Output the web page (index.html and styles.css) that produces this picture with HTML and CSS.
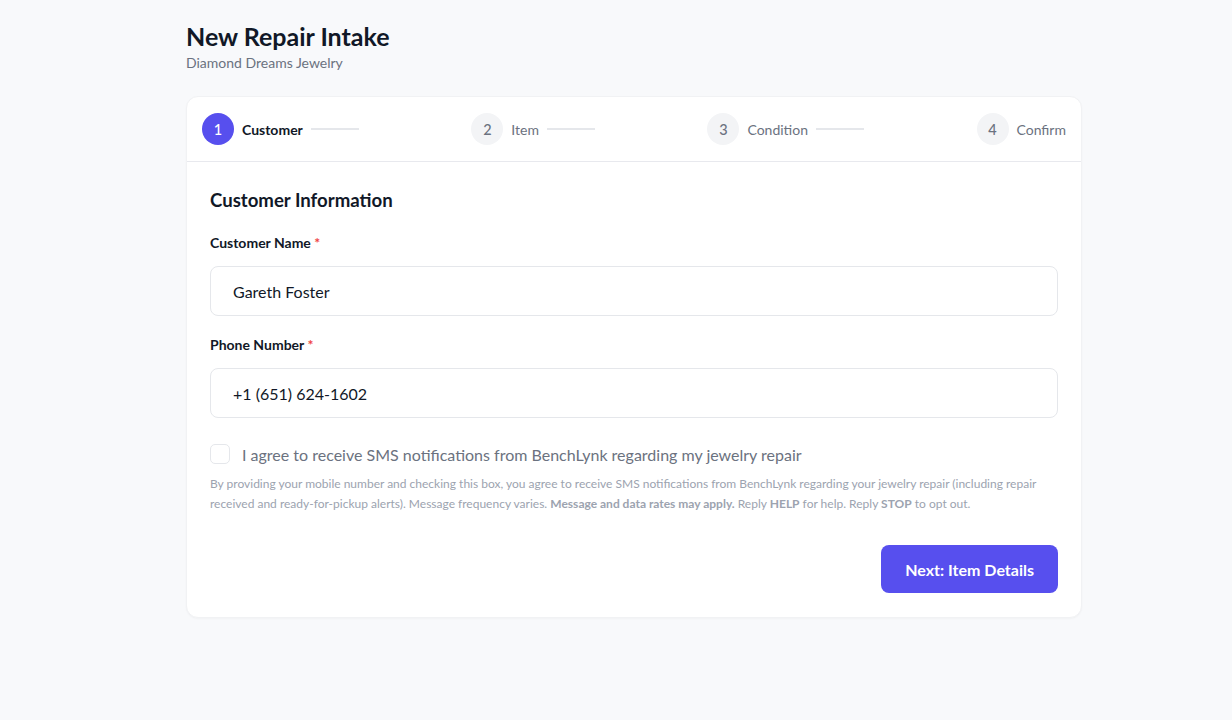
FILE: index.html
```html
<!DOCTYPE html>
<html lang="en">
<head>
<meta charset="utf-8">
<title>New Repair Intake</title>
<link rel="stylesheet" href="styles.css">
</head>
<body>
<main class="page">
  <header class="head">
    <h1 class="title">New Repair Intake</h1>
    <p class="subtitle">Diamond Dreams Jewelry</p>
  </header>
  <section class="card">
    <nav class="steps">
      <div class="step active"><span class="num">1</span><span class="label">Customer</span><span class="line"></span></div>
      <div class="step"><span class="num">2</span><span class="label">Item</span><span class="line"></span></div>
      <div class="step"><span class="num">3</span><span class="label">Condition</span><span class="line"></span></div>
      <div class="step"><span class="num">4</span><span class="label">Confirm</span></div>
    </nav>
    <div class="body">
      <h2 class="section-title">Customer Information</h2>
      <label class="field-label">Customer Name <span class="req">*</span></label>
      <div class="input">Gareth Foster</div>
      <label class="field-label">Phone Number <span class="req">*</span></label>
      <div class="input">+1 (651) 624-1602</div>
      <div class="consent">
        <span class="box"></span>
        <span class="consent-text">I agree to receive SMS notifications from BenchLynk regarding my jewelry repair</span>
      </div>
      <p class="fine">By providing your mobile number and checking this box, you agree to receive SMS notifications from BenchLynk regarding your jewelry repair (including repair received and ready-for-pickup alerts). Message frequency varies. <b>Message and data rates may apply.</b> Reply <b>HELP</b> for help. Reply <b>STOP</b> to opt out.</p>
      <div class="actions"><button class="btn">Next: Item Details</button></div>
    </div>
  </section>
</main>
</body>
</html>
```
FILE: styles.css
```css
* { box-sizing: border-box; }
html, body { margin: 0; padding: 0; }
body {
  background: #f8f9fb;
  font-family: Lato, "Noto Sans", sans-serif;
  color: #111827;
  min-height: 720px;
}
.page {
  width: 896px;
  margin-left: 186px;
  padding-top: 22px;
}
.head { padding-bottom: 24px; }
.title {
  margin: 0;
  font-size: 25px;
  font-weight: 700;
  line-height: 28px;
  color: #111827;
}
.subtitle {
  margin: 4px 0 0;
  font-size: 14px;
  line-height: 18px;
  color: #6b7280;
}
.card {
  background: #fff;
  border: 1px solid #f1f2f4;
  border-radius: 12px;
  box-shadow: 0 1px 2px rgba(0,0,0,0.03);
}
.steps {
  display: flex;
  justify-content: space-between;
  align-items: center;
  height: 65px;
  padding: 0 15px;
  border-bottom: 1px solid #e8e9ee;
}
.step { display: flex; align-items: center; }
.num {
  width: 32px; height: 32px;
  border-radius: 50%;
  background: #f3f4f6;
  color: #6b7280;
  display: flex; align-items: center; justify-content: center;
  font-size: 14.5px; font-weight: 500;
}
.label {
  margin-left: 8px;
  font-size: 14px;
  color: #6b7280;
}
.step.active .num { background: #574fee; color: #fff; }
.step.active .label { color: #111827; font-weight: 700; }
.line {
  width: 48px; height: 2px;
  background: #e5e7eb;
  margin-left: 8px;
}
.body { padding: 24px 23px 24px; }
.section-title {
  margin: 2px 0 0;
  font-size: 18.6px;
  font-weight: 700;
  line-height: 24px;
  color: #111827;
}
.field-label {
  display: block;
  margin-top: 21px;
  font-size: 14px;
  font-weight: 700;
  line-height: 20px;
  color: #111827;
}
.input + .field-label { margin-top: 19px; }
.req { color: #ef4444; }
.input {
  margin-top: 13px;
  height: 50px;
  border: 1px solid #e5e7eb;
  border-radius: 8px;
  padding: 0 22px;
  display: flex; align-items: center;
  font-size: 16px;
  color: #111827;
}
.consent {
  display: flex; align-items: center;
  margin-top: 26px;
}
.box {
  width: 20px; height: 20px;
  border: 1px solid #e5e7eb;
  border-radius: 5px;
  flex: none;
}
.consent-text {
  margin-left: 12px;
  font-size: 16px;
  color: #6b7280;
}
.fine {
  margin: 10px 0 0;
  font-size: 12px;
  line-height: 20px;
  color: #9ca3af;
}
.fine b { font-weight: 700; color: #9ca3af; }
.actions {
  display: flex; justify-content: flex-end;
  margin-top: 31px;
}
.btn {
  height: 48px;
  padding: 0 24px;
  border: 0;
  border-radius: 8px;
  background: #574fee;
  color: #fff;
  font-family: inherit;
  font-size: 16px;
  font-weight: 700;
}
```
